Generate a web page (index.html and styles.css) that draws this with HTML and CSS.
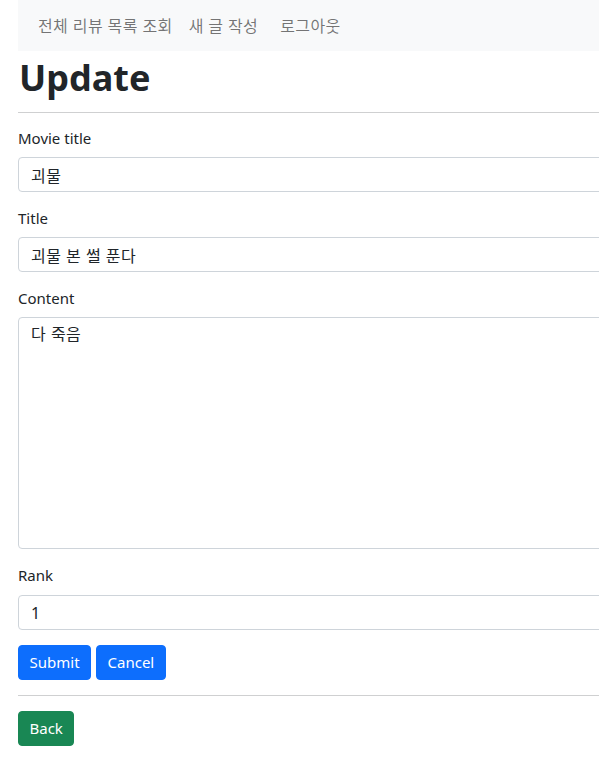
FILE: index.html
```html
<!DOCTYPE html>
<html lang="ko">
<head>
<meta charset="utf-8">
<title>Update</title>
<link rel="stylesheet" href="styles.css">
</head>
<body>
<div class="container">
  <nav class="navbar">
    <a class="nav-link" href="#">전체 리뷰 목록 조회</a>
    <a class="nav-link" href="#">새 글 작성</a>
    <a class="nav-link logout" href="#">로그아웃</a>
  </nav>
  <h1 class="title">Update</h1>
  <hr class="rule">
  <form class="form">
    <div class="field">
      <label class="label" for="movie">Movie title</label>
      <input class="control" id="movie" type="text" value="괴물">
    </div>
    <div class="field">
      <label class="label" for="title">Title</label>
      <input class="control" id="title" type="text" value="괴물 본 썰 푼다">
    </div>
    <div class="field">
      <label class="label" for="content">Content</label>
      <textarea class="control textarea" id="content">다 죽음</textarea>
    </div>
    <div class="field field-last">
      <label class="label" for="rank">Rank</label>
      <input class="control" id="rank" type="text" value="1">
    </div>
    <div class="actions">
      <button class="btn btn-primary" type="submit">Submit</button>
      <button class="btn btn-primary" type="reset">Cancel</button>
    </div>
  </form>
  <hr class="rule rule-bottom">
  <a class="btn btn-success" href="#">Back</a>
</div>
</body>
</html>
```

FILE: styles.css
```css
html {
  overflow: hidden;
}
body {
  margin: 0;
  font-family: "Noto Sans", "Noto Sans CJK KR", sans-serif;
  font-size: 15px;
  line-height: 1.5;
  color: #212529;
  background: #fff;
}
.container {
  width: 1200px;
  padding-left: 18px;
}
.navbar {
  display: flex;
  align-items: center;
  height: 51px;
  background: #f8f9fa;
  padding-left: 12px;
}
.nav-link {
  color: rgba(0, 0, 0, 0.55);
  text-decoration: none;
  font-size: 16px;
  letter-spacing: 0.4px;
  padding: 0 8px;
}
.logout {
  margin-left: 6px;
}
.title {
  margin: 5px 0 0;
  font-size: 36px;
  font-weight: 700;
  line-height: 1.2;
  padding-left: 1px;
}
.rule {
  margin: 13px 0 0;
  border: 0;
  border-top: 1px solid #cfd0d1;
  height: 0;
}
.form {
  margin-top: 14px;
}
.field {
  margin-bottom: 15px;
}
.label {
  display: block;
  line-height: 23px;
  margin-bottom: 7px;
}
.field-last .label {
  margin-bottom: 8px;
}
.control {
  display: block;
  box-sizing: border-box;
  width: 100%;
  height: 35px;
  margin: 0;
  padding: 0 12px;
  border: 1px solid #ced4da;
  border-radius: 4px;
  font-family: inherit;
  font-size: 16px;
  letter-spacing: 0.5px;
  color: #212529;
  background: #fff;
}
.textarea {
  height: 232px;
  padding-top: 4px;
  resize: vertical;
  line-height: 1.5;
}
.actions {
  display: flex;
  gap: 5px;
}
.btn {
  display: inline-block;
  box-sizing: border-box;
  height: 35px;
  padding: 0 10.5px;
  border: 1px solid transparent;
  border-radius: 4px;
  font-family: inherit;
  font-size: 15px;
  line-height: 33px;
  color: #fff;
  text-decoration: none;
  cursor: pointer;
}
.btn-primary {
  background: #0d6efd;
  border-color: #0d6efd;
}
.btn-success {
  background: #198754;
  border-color: #198754;
}
.rule-bottom {
  margin: 15px 0 15px;
}
```
